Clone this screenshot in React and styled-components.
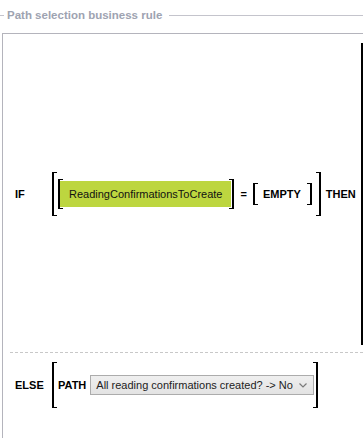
import React from 'react';
import styled, { createGlobalStyle } from 'styled-components';

const GlobalStyle = createGlobalStyle`
  html, body {
    margin: 0;
    padding: 0;
    background: #ffffff;
    overflow: hidden;
  }
  body {
    font-family: "Liberation Sans", Arial, sans-serif;
    font-size: 11px;
    color: #000000;
  }
`;

const Header = styled.div`
  display: flex;
  align-items: center;
  height: 30px;
  gap: 3px;
`;

const HeaderLine = styled.div`
  height: 1px;
  background: #c4c4cc;
  width: ${(p) => (p.$grow ? 'auto' : '4px')};
  flex: ${(p) => (p.$grow ? '1' : '0 0 auto')};
  margin-left: ${(p) => (p.$grow ? '4px' : '0')};
`;

const Legend = styled.span`
  font-size: 11.5px;
  font-weight: bold;
  color: #9ea3b1;
  white-space: nowrap;
`;

const Panel = styled.div`
  margin: 3px 0 0 2px;
  border-top: 1px solid #b4b4bc;
  border-left: 1px solid #b4b4bc;
  padding: 9px 0 40px 0;
`;

const RuleRow = styled.div`
  display: flex;
  align-items: center;
  padding-left: 12px;
  white-space: nowrap;
`;

const Keyword = styled.span`
  font-weight: bold;
  flex: 0 0 auto;
  width: ${(p) => p.$width || 'auto'};
  margin: ${(p) => p.$margin || '0'};
`;

const Group = styled.div`
  display: flex;
  align-items: stretch;
  flex: 0 0 auto;
  margin: ${(p) => p.$margin || '0'};
`;

const Bracket = styled.div`
  flex: 0 0 auto;
  width: 5px;
  box-sizing: border-box;
  border-top: 1px solid #000;
  border-bottom: 1px solid #000;
  ${(p) => (p.$side === 'right' ? 'border-right: 2px solid #000;' : 'border-left: 2px solid #000;')}
  margin: ${(p) => p.$margin || '0'};
`;

const Content = styled.div`
  display: flex;
  align-items: center;
  padding: ${(p) => p.$pad || 0}px 0;
`;

const FieldChip = styled.div`
  background: #bdd63f;
  height: 26px;
  line-height: 26px;
  padding: 0 9px;
  color: #111;
`;

const Operator = styled.span`
  font-weight: bold;
  margin: ${(p) => p.$margin || '0'};
`;

const ThenBracket = styled.div`
  flex: 1 0 10px;
  height: 302px;
  box-sizing: border-box;
  border-top: 1px solid #000;
  border-bottom: 1px solid #000;
  border-left: 2px solid #000;
  margin-left: 5px;
`;

const Divider = styled.div`
  margin: 7px 0 9px 7px;
  border-top: 1px dashed #c8c8c8;
`;

const SelectBox = styled.div`
  display: flex;
  align-items: center;
  justify-content: space-between;
  box-sizing: border-box;
  width: 224px;
  height: 20px;
  padding: 0 6px 0 5px;
  border: 1px solid #acacac;
  background: linear-gradient(#efefef, #e3e3e3);
  color: #222;
`;

const Chevron = () => (
  <svg width="8" height="5" viewBox="0 0 8 5">
    <path d="M0.5 0.5 L4 4 L7.5 0.5" fill="none" stroke="#7a7a7a" strokeWidth="1.2" />
  </svg>
);

export default function App() {
  return (
    <>
      <GlobalStyle />
      <Header>
        <HeaderLine />
        <Legend>Path selection business rule</Legend>
        <HeaderLine $grow />
      </Header>
      <Panel>
        <RuleRow>
          <Keyword $width="37px">IF</Keyword>
          <Group>
            <Bracket />
            <Content $pad={7}>
              <Group $margin="0 0 0 1px">
                <Bracket $margin="0 -3px 0 0" />
                <Content $pad={2}>
                  <FieldChip>ReadingConfirmationsToCreate</FieldChip>
                </Content>
                <Bracket $side="right" $margin="0 0 0 -2px" />
              </Group>
              <Operator $margin="0 6px 0 6px">=</Operator>
              <Group>
                <Bracket />
                <Content $pad={5}>
                  <Keyword $margin="0 6px 0 5px">EMPTY</Keyword>
                </Content>
                <Bracket $side="right" />
              </Group>
            </Content>
            <Bracket $side="right" $margin="0 0 0 4px" />
          </Group>
          <Keyword $margin="0 0 0 5px">THEN</Keyword>
          <ThenBracket />
        </RuleRow>
        <Divider />
        <RuleRow>
          <Keyword $width="37px">ELSE</Keyword>
          <Group>
            <Bracket />
            <Content $pad={13}>
              <Keyword $margin="0 4px 0 1px">PATH</Keyword>
              <SelectBox>
                <span>All reading confirmations created? -&gt; No</span>
                <Chevron />
              </SelectBox>
            </Content>
            <Bracket $side="right" $margin="0 0 0 -1px" />
          </Group>
        </RuleRow>
      </Panel>
    </>
  );
}
